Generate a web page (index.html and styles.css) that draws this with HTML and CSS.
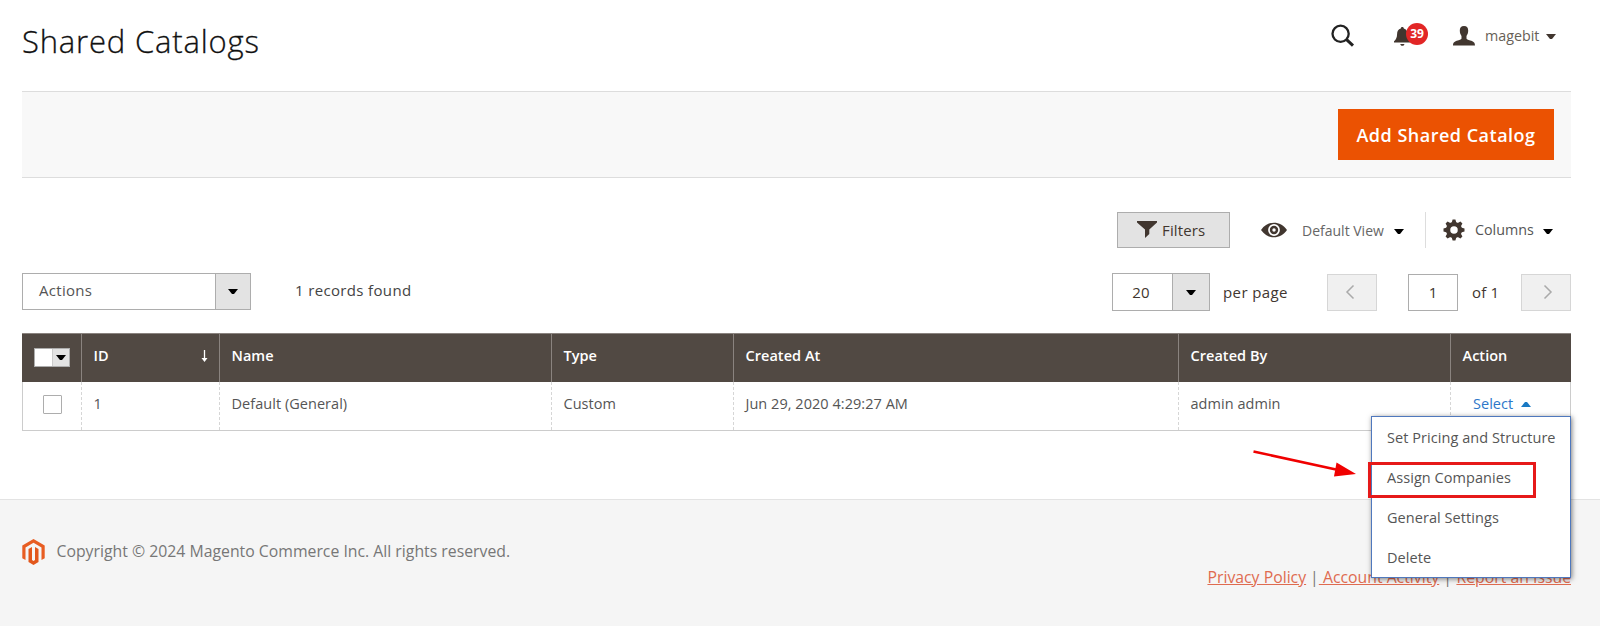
FILE: index.html
```html
<!DOCTYPE html>
<html lang="en">
<head>
<meta charset="utf-8">
<title>Shared Catalogs</title>
<link rel="stylesheet" href="styles.css">
</head>
<body>
<header class="header">
  <h1 class="title">Shared Catalogs</h1>
  <div class="tools">
    <svg class="search" width="24" height="24" viewBox="0 0 24 24"><circle cx="9.6" cy="9.8" r="8.1"/><path d="M15.6 15.6 22 21.6" stroke-width="3"/></svg>
    <div class="notify">
      <svg width="17" height="19" viewBox="0 0 17 19"><path d="M8.300 0c1 0 1.500.6 1.500 1.500 2.600.6 3.600 2.700 3.700 5.500.1 3.700 1.100 5.500 3.100 7.200v1.300H0v-1.300c2-1.700 3-3.500 3.100-7.200.1-2.800 1.100-4.900 3.700-5.500C6.800.6 7.300 0 8.300 0zM6.200 17h4.300c-.4 1.300-1.100 1.800-2.100 1.800S6.600 18.300 6.200 17z"/></svg>
      <span class="badge">39</span>
    </div>
    <div class="user">
      <svg width="22" height="20" viewBox="0 0 22 20"><path d="M11 0c3 0 4.300 1.700 4.200 4.600 0 2.500-.8 4.100-1.700 5.300v2.600c0 .7 1.300 1.200 3.700 1.900 3.300 1 4.800 1.800 4.800 5.200H0c0-3.400 1.500-4.200 4.800-5.200 2.400-.7 3.700-1.200 3.700-1.900V9.900C7.600 8.700 6.800 7.100 6.800 4.600 6.700 1.700 8 0 11 0z"/></svg>
      <span class="user-name">magebit</span><i class="caret"></i>
    </div>
  </div>
</header>

<section class="page-actions"><button class="primary">Add Shared Catalog</button></section>

<div class="views">
  <button class="filters"><svg width="20" height="17" viewBox="0 0 20 17"><path d="M0 0h20v1.500L12.300 8.500V13L8 17V8.500L0 1.500z"/></svg><span>Filters</span></button>
  <div class="view">
    <svg width="26" height="16" viewBox="0 0 26 16"><path fill-rule="evenodd" d="M0 8C3.500 3 8 .7 13 .7S22.500 3 26 8c-3.500 5-8 7.300-13 7.300S3.500 13 0 8zm13-5.900a5.900 5.900 0 1 0 0 11.800 5.900 5.900 0 0 0 0-11.800z"/><circle cx="13" cy="8" r="4.200"/><circle cx="13" cy="8" r="1.700" fill="#fff"/></svg>
    <span class="view-name">Default View</span><i class="caret"></i>
  </div>
  <div class="columns">
    <svg width="22" height="22" viewBox="-11 -11 22 22"><circle r="5.900" fill="none" stroke="#41362f" stroke-width="4.300"/><g id="teeth"><path d="M-2.400-7-1.400-10.500h2.800L2.400-7zM-2.400 7l1 3.500h2.800l1-3.500zM7-2.400l3.500 1v2.800L7 2.400zM-7-2.400l-3.500 1v2.800l3.500 1z"/></g><use href="#teeth" transform="rotate(45)"/></svg>
    <span class="columns-name">Columns</span><i class="caret"></i>
  </div>
</div>

<div class="controls">
  <div class="select actions"><span class="select-value">Actions</span><span class="select-arrow"><i class="caret"></i></span></div>
  <span class="records">1 records found</span>
  <div class="pager">
    <div class="select size"><span class="select-value">20</span><span class="select-arrow"><i class="caret"></i></span></div>
    <span class="per-page">per page</span>
    <span class="step prev"><svg width="10" height="16" viewBox="0 0 10 16"><path d="M8.500 1.500 2 8l6.500 6.500"/></svg></span>
    <span class="page-input">1</span>
    <span class="of">of 1</span>
    <span class="step next"><svg width="10" height="16" viewBox="0 0 10 16"><path d="M1.500 1.500 8 8l-6.500 6.500"/></svg></span>
  </div>
</div>

<main class="grid">
  <div class="row head">
    <div class="cell check"><span class="multi"><i></i><b><i class="caret"></i></b></span></div>
    <div class="cell sorted"><span>ID</span><svg width="7" height="12" viewBox="0 0 7 12"><path d="M3.500 0v10" stroke="#fff" stroke-width="1.300"/><path d="M.5 8h6l-3 4z" fill="#fff"/></svg></div>
    <div class="cell">Name</div>
    <div class="cell">Type</div>
    <div class="cell">Created At</div>
    <div class="cell">Created By</div>
    <div class="cell">Action</div>
  </div>
  <div class="row body">
    <div class="cell check"><span class="box"></span></div>
    <div class="cell">1</div>
    <div class="cell">Default (General)</div>
    <div class="cell">Custom</div>
    <div class="cell">Jun 29, 2020 4:29:27 AM</div>
    <div class="cell">admin admin</div>
    <div class="cell action"><span>Select</span><i class="caret up"></i>
      <div class="menu">
        <div>Set Pricing and Structure</div>
        <div>Assign Companies</div>
        <div>General Settings</div>
        <div>Delete</div>
        <span class="highlight"></span>
        <svg class="arrow" width="106" height="32" viewBox="0 0 106 32"><path d="M1.500 4.500 84 22.500" stroke="#f00000" stroke-width="2.600"/><path d="M84.500 15.500 104 27 82 29.500z" fill="#f00000"/></svg>
      </div>
    </div>
  </div>
</main>

<footer class="footer">
  <div class="copyright">
    <svg width="23" height="26" viewBox="0 0 23 26"><path d="M11.500 0 22.700 6.500v12.800l-3.200 1.800V8.400l-8-4.600-8 4.600v12.700L.3 19.300V6.500z" fill="#e85d22"/><path d="M6.500 10 10 8.100v12.900l1.500.9 1.500-.9V8.100l3.500 1.900v12.900L11.500 26l-5-3.100z" fill="#e2571c"/></svg>
    <span>Copyright © 2024 Magento Commerce Inc. All rights reserved.</span>
  </div>
  <nav class="links"><a>Privacy Policy</a><span class="bar-tight">|</span><a>&nbsp;Account Activity</a><span>|</span><a>Report an Issue</a></nav>
</footer>
</body>
</html>
```

FILE: styles.css
```css
* { box-sizing: border-box; }
body { margin: 0; height: 626px; overflow: hidden; display: flex; flex-direction: column; background: #fff; color: #41362f; font: 14.5px/20px "Open Sans", sans-serif; white-space: nowrap; }
svg { display: block; fill: #41362f; flex: none; }
button { font: inherit; border: 0; border-radius: 0; margin: 0; }
.caret { display: block; flex: none; border: 4.5px solid transparent; border-width: 5.5px 4.5px 0; border-top-color: #000; }
.caret.up { border-width: 0 4.5px 5.5px; border-bottom-color: #1979c3; }
.caret { width: 10px; }

.header { height: 91px; padding: 0 44px 0 22px; display: flex; justify-content: space-between; }
.title { margin: 19px 0 0; font-size: 31px; line-height: 44px; font-weight: 300; letter-spacing: .82px; color: #111; -webkit-text-stroke: .3px #111; }
.tools { display: flex; height: 72px; align-items: center; }
.search { fill: none; stroke: #222; stroke-width: 2.3; }
.notify { position: relative; margin-left: 39px; }
.badge { position: absolute; left: 12px; top: -4px; width: 22px; height: 22px; border-radius: 50%; background: #e22626; color: #fff; font-size: 12px; font-weight: 700; line-height: 22px; text-align: center; }
.user { display: flex; align-items: center; margin-left: 42px; }
.user-name { width: 61px; margin-left: 10px; color: #676056; font-size: 14.3px; }
.header .caret { border-top-color: #41362f; }

.page-actions { height: 87px; margin: 0 29px 0 22px; padding-right: 17px; background: #f8f8f8; border: solid #ddd; border-width: 1px 0; display: flex; align-items: center; justify-content: flex-end; }
.primary { width: 216px; height: 51px; background: #eb5202; color: #fff; font-size: 18px; font-weight: 600; letter-spacing: .5px; padding: 0; }

.views { height: 36px; margin: 34px 47px 0 0; display: flex; align-items: center; justify-content: flex-end; }
.filters { width: 113px; height: 36px; padding: 0 0 1px 19px; background: #e3e3e3; border: 1px solid #adadad; display: flex; align-items: center; gap: 5px; color: #41362f; font-size: 15px; font-weight: 500; letter-spacing: .15px; }
.view { display: flex; align-items: center; margin-left: 31px; }
.view-name { margin: 2px 0 0 15px; width: 92px; color: #666; font-size: 14px; }
.views .caret { margin-top: 3px; }
.columns { display: flex; align-items: center; height: 36px; margin-left: 21px; padding-left: 17px; border-left: 1px solid #ddd; }
.columns-name { margin-left: 10px; width: 68px; color: #555; font-size: 14.3px; }

.controls { height: 38px; margin: 25px 29px 0 22px; display: flex; align-items: flex-start; }
.select { display: flex; height: 37px; border: 1px solid #adadad; }
.select-value { flex: 1; line-height: 33px; }
.select-arrow { width: 36px; background: #e3e3e3; border-left: 1px solid #adadad; display: flex; align-items: center; justify-content: center; }
.actions { width: 229px; }
.actions .select-arrow { width: 35px; }
.actions .select-value { padding-left: 16px; font-size: 15px; letter-spacing: .3px; color: #555; }
.records { margin: 7px 0 0 44px; font-size: 15px; letter-spacing: .35px; color: #444; }
.pager { margin-left: auto; display: flex; align-items: center; height: 38px; font-size: 15px; }
.size { width: 98px; height: 38px; }
.size .select-value { text-align: center; line-height: 36px; padding-right: 3px; letter-spacing: .2px; }
.size .select-arrow { width: 37px; }
.per-page { width: 117px; padding-left: 13px; letter-spacing: .4px; }
.step { width: 50px; height: 37px; background: #f0f0f0; border: 1px solid #d6d6d6; display: flex; align-items: center; justify-content: center; }
.prev svg { margin-right: 4px; }
.next svg { margin-left: 3px; }
.step svg { fill: none; stroke: #aaa; stroke-width: 1.5; }
.page-input { width: 50px; height: 37px; margin-left: 31px; border: 1px solid #adadad; text-align: center; line-height: 35px; }
.of { width: 63px; padding-left: 14px; letter-spacing: .2px; }

.grid { margin: 22px 29px 0 22px; flex: none; }
.row { display: grid; grid-template-columns: 59px 138px 332px 182px 445px 272px 121px; }
.head { height: 49px; background: #514943; color: #fff; font-weight: 600; border-top: 1px solid #8a837f; }
.body { height: 49px; border: solid #ccc; border-width: 0 1px 1px 0; }
.cell { display: flex; align-items: center; padding: 0 11px 4px 11.5px; border-left: 1px solid #8a837f; letter-spacing: .04px; }
.body .cell { border-left: 1px dashed #d6d6d6; padding-bottom: 4px; color: #555; }
.cell:first-child { border-left-color: #514943; }
.body .cell:first-child { border-left: 1px solid #ccc; }
.head .cell.check, .body .cell.check { padding: 0; justify-content: center; }
.multi { width: 36px; height: 19px; margin-top: -1px; border: 1px solid #adadad; display: flex; background: #fff; }
.multi > i { width: 17px; }
.multi b { flex: 1; background: #e3e3e3; border-left: 1px solid #ccc; display: flex; align-items: center; justify-content: center; }
.box { width: 19px; height: 19px; border: 1px solid #adadad; border-radius: 1px; background: #fff; margin: -4px 0 0 1px; }
.sorted { justify-content: space-between; }
.body .action { position: relative; padding-left: 22px; color: #2d77c9; }
.action .caret { margin-left: 8px; }
.menu { position: absolute; z-index: 2; left: -80px; top: 34px; width: 200px; height: 162px; padding-top: .5px; background: #fff; border: 1px solid #4f78bd; box-shadow: 1px 1px 5px rgba(0,0,0,.5); color: #555; }
.menu div { height: 40.2px; line-height: 40px; padding-left: 15px; letter-spacing: .06px; }
.highlight { position: absolute; left: -4px; top: 45px; width: 168px; height: 36px; border: 3px solid #e61919; }
.arrow { position: absolute; left: -120px; top: 30px; }

.footer { margin-top: 68px; height: 127px; flex: none; background: #f5f5f5; border-top: 1px solid #e3e3e3; padding: 38px 29px 0 22px; color: #777; font-size: 15.8px; }
.copyright { display: flex; gap: 11.500px; height: 28px; }
.copyright svg { margin-top: 1px; }
.copyright span { line-height: 26px; }
.links { display: flex; justify-content: flex-end; line-height: 22px; }
.links a { color: #df6b50; text-decoration: underline; }
.links span { margin: 0 4.5px 0 4px; }
.links .bar-tight { margin-right: 0; }
```
